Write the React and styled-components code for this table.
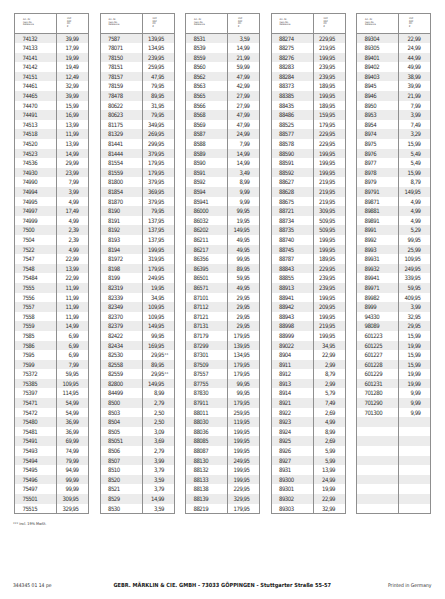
import React from "react";
import styled, { createGlobalStyle } from "styled-components";

const GlobalStyle = createGlobalStyle`
  html, body { margin: 0; padding: 0; background: #ffffff; }
  body { font-family: "Liberation Sans Narrow", "DejaVu Sans Condensed", "Liberation Sans", Arial, sans-serif; color: #303030; }
`;

const g1 = `74132|39,99 74133|17,99 74141|19,99 74142|19,49 74151|12,49 74461|32,99 74465|39,99 74470|15,99 74491|16,99 74513|13,99 74518|11,99 74520|13,99 74523|14,99 74536|29,99 74930|23,99 74990|7,99 74994|3,99 74995|4,99 74997|17,49 74999|4,99 7500|2,39 7504|2,39 7522|4,99 7547|22,99 7548|13,99 75484|22,99 7555|11,99 7556|11,99 7557|11,99 7558|11,99 7559|14,99 7585|6,99 7586|6,99 7595|6,99 7599|7,99 75372|59,95 75385|109,95 75397|114,95 75471|54,99 75472|54,99 75480|36,99 75481|36,99 75491|69,99 75493|74,99 75494|79,99 75495|94,99 75496|99,99 75497|99,99 75501|309,95 75515|329,95`;
const g2 = `7587|139,95 78071|134,95 78150|239,95 78151|259,95 78157|47,95 78159|79,95 78478|89,95 80622|31,95 80623|79,95 81175|349,95 81329|269,95 81441|299,95 81444|379,95 81554|179,95 81559|179,95 81800|379,95 81854|369,95 81870|379,95 8190|79,95 8191|137,95 8192|137,95 8193|137,95 8194|199,95 81972|319,95 8198|179,95 8199|249,95 82319|19,95 82339|34,95 82349|109,95 82370|109,95 82379|149,95 82422|99,95 82434|169,95 82530|29,95** 82558|89,95 82559|29,95** 82800|149,95 84499|8,99 8500|2,79 8503|2,50 8504|2,50 8505|3,09 85051|3,69 8506|2,79 8507|3,99 8510|3,79 8520|3,59 8521|3,79 8529|14,99 8530|3,59`;
const g3 = `8531|3,59 8539|14,99 8559|21,99 8560|59,99 8562|47,99 8563|42,99 8565|27,99 8566|27,99 8568|47,99 8569|47,99 8587|24,99 8588|7,99 8589|14,99 8590|14,99 8591|3,49 8592|8,99 8594|9,99 85941|9,99 86000|99,95 86032|19,95 86202|149,95 86211|49,95 86217|49,95 86356|99,95 86395|89,95 86501|59,95 86571|49,95 87101|29,95 87112|29,95 87121|29,95 87131|29,95 87179|179,95 87299|139,95 87301|134,95 87509|179,95 87557|179,95 87755|99,95 87830|99,95 87911|179,95 88011|259,95 88030|119,95 88036|199,95 88085|199,95 88087|199,95 88130|249,95 88132|199,95 88133|199,95 88138|229,95 88139|329,95 88219|179,95`;
const g4 = `88274|229,95 88275|219,95 88276|199,95 88283|239,95 88284|239,95 88373|189,95 88385|199,95 88435|189,95 88486|159,95 88525|179,95 88577|229,95 88578|229,95 88590|199,95 88591|199,95 88592|199,95 88627|219,95 88628|219,95 88675|219,95 88721|309,95 88734|509,95 88735|509,95 88740|199,95 88745|199,95 88787|189,95 88843|229,95 88855|239,95 88913|239,95 88941|199,95 88942|209,95 88943|199,95 88998|219,95 88999|199,95 89022|34,95 8904|22,99 8911|2,99 8912|8,79 8913|2,99 8914|5,79 8921|7,49 8922|2,69 8923|4,99 8924|8,99 8925|2,69 8926|5,99 8927|5,99 8931|13,99 89300|24,99 89301|19,99 89302|22,99 89303|32,99`;
const g5 = `89304|22,99 89305|24,99 89401|44,99 89402|49,99 89403|38,99 8945|39,99 8946|21,99 8950|7,99 8953|3,99 8954|7,49 8974|3,29 8975|15,99 8976|5,49 8977|5,49 8978|15,99 8979|8,79 89791|149,95 89871|4,99 89881|4,99 89891|4,99 8991|5,29 8992|99,95 8993|25,99 89931|109,95 89932|249,95 89941|339,95 89971|59,95 89982|409,95 8999|3,99 94330|32,95 98089|29,95 601223|15,99 601225|19,99 601227|15,99 601228|15,99 601229|19,99 601231|19,99 701280|9,99 701290|9,99 701300|9,99`;

const ROWS = 50;
const parse = (s) => {
  const items = s.split(" ").map((p) => {
    const [art, price] = p.split("|");
    const star = price.endsWith("**");
    return { art, price: star ? price.slice(0, -2) : price, star };
  });
  while (items.length < ROWS) items.push({ art: "", price: "", star: false });
  return items;
};
const groups = [g1, g2, g3, g4, g5].map(parse);

const Page = styled.div`
  width: 445px;
  height: 599px;
  box-sizing: border-box;
  padding: 12.5px 13.5px 0 14px;
  display: flex;
  flex-direction: column;
  overflow: hidden;
`;

const Tables = styled.div`
  display: flex;
  gap: 10.5px;
`;

const Table = styled.div`
  width: 75px;
  box-sizing: border-box;
  border: 1px solid #8f8f8f;
  display: flex;
  flex-direction: column;
`;

const Grid = styled.div`
  display: grid;
  grid-template-columns: 41px 1fr;
`;

const HeadRow = styled(Grid)`
  height: 19px;
  border-bottom: 1px solid #8f8f8f;
`;

const HeadCell = styled.div`
  display: flex;
  flex-direction: column;
  justify-content: center;
  padding-left: ${(p) => (p.$price ? "10px" : "8px")};
  font-size: 2.4px;
  line-height: 2.5px;
  color: #3a3a3a;
  ${(p) => (p.$price ? "border-left: 1px solid #8f8f8f;" : "")}
`;

const Row = styled(Grid)`
  height: 9.6px;
  background: ${(p) => (p.$shade ? "#ececec" : "#ffffff")};
`;

const ArtCell = styled.div`
  padding-left: 7.5px;
  font-size: 6px;
  line-height: 9.6px;
  letter-spacing: -0.5px;
  white-space: nowrap;
`;

const PriceCell = styled.div`
  border-left: 1px solid #8f8f8f;
  padding-right: 9.5px;
  text-align: right;
  font-size: 6px;
  line-height: 9.6px;
  letter-spacing: -0.5px;
  white-space: nowrap;
`;

const Stars = styled.span`
  font-size: 4px;
  letter-spacing: 0;
  position: relative;
  top: -1.6px;
  margin-right: -4.2px;
  margin-left: 0.6px;
`;

const Footnote = styled.div`
  margin-top: 7px;
  font-size: 3.8px;
  line-height: 5px;
  margin-left: -1px;
`;

const Footer = styled.div`
  margin-top: auto;
  margin-bottom: 10px;
  margin-left: -1px;
  display: flex;
  align-items: center;
  justify-content: space-between;
  height: 8px;
`;

const FootText = styled.div`
  font-size: 5px;
  white-space: nowrap;
  flex: 1;
  text-align: ${(p) => p.$align || "left"};
`;

const FootCenter = styled.div`
  font-size: 5.6px;
  font-weight: bold;
  white-space: nowrap;
  color: #222;
`;

function PriceTable({ rows }) {
  return (
    <Table>
      <HeadRow>
        <HeadCell>
          <span>Art.-Nr.</span>
          <span>Item-No.</span>
          <span>Référence</span>
        </HeadCell>
        <HeadCell $price>
          <span>UVP</span>
          <span>RRP</span>
          <span>PPI</span>
          <span>€</span>
        </HeadCell>
      </HeadRow>
      {rows.map((r, i) => (
        <Row key={i} $shade={i % 2 === 0}>
          <ArtCell>{r.art}</ArtCell>
          <PriceCell>
            {r.price}
            {r.star && <Stars>**</Stars>}
          </PriceCell>
        </Row>
      ))}
    </Table>
  );
}

export default function App() {
  return (
    <>
      <GlobalStyle />
      <Page>
        <Tables>
          {groups.map((rows, i) => (
            <PriceTable key={i} rows={rows} />
          ))}
        </Tables>
        <Footnote>*** incl. 19% MwSt.</Footnote>
        <Footer>
          <FootText>344345 01 14 pe</FootText>
          <FootCenter>GEBR. MÄRKLIN &amp; CIE. GMBH - 73033 GÖPPINGEN - Stuttgarter Straße 55-57</FootCenter>
          <FootText $align="right">Printed in Germany</FootText>
        </Footer>
      </Page>
    </>
  );
}
